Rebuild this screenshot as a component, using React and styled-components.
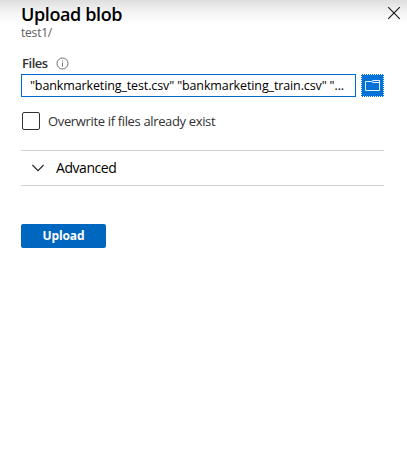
import React from "react";
import styled, { createGlobalStyle } from "styled-components";

const GlobalStyle = createGlobalStyle`
  * { box-sizing: border-box; }
  body { margin: 0; background: #fff; font-family: "Open Sans", "Noto Sans", sans-serif; }
  button { font-family: inherit; }
`;

const Panel = styled.main`
  width: 407px;
  height: 465px;
  padding: 0 23px 0 21px;
  background: linear-gradient(#dedede 0, #ebebeb 7px, #f6f6f6 14px, #fff 25px);
  overflow: hidden;
`;

const Header = styled.header`
  display: flex;
  justify-content: space-between;
  height: 52px;
  margin-right: -17px;
`;

const Title = styled.h1`
  margin: 2px 0 0;
  font-size: 18px;
  line-height: 24px;
  font-weight: 600;
  letter-spacing: -0.38px;
  color: #000;
  white-space: nowrap;
`;

const Path = styled.div`
  font-size: 12px;
  line-height: 13px;
  letter-spacing: -0.2px;
  color: #605e5c;
`;

const CloseButton = styled.button`
  display: flex;
  width: 14px;
  height: 14px;
  margin-top: 6px;
  padding: 0;
  border: 0;
  background: none;
`;

const FieldLabel = styled.label`
  display: flex;
  align-items: center;
  gap: 8px;
  height: 22px;
  padding-left: 1px;
  font-size: 13px;
  line-height: 18px;
  font-weight: 600;
  letter-spacing: -0.45px;
  color: #323130;
`;

const LabelText = styled.span`
  margin-top: -1px;
`;

const FileRow = styled.div`
  display: flex;
  gap: 5px;
  height: 23px;
`;

const FileInput = styled.div`
  width: 335px;
  padding-left: 8px;
  border: 1px solid #0069cd;
  background: #fff;
  font-size: 12.5px;
  line-height: 21px;
  letter-spacing: -0.12px;
  color: #000;
  white-space: nowrap;
`;

const BrowseButton = styled.button`
  display: flex;
  align-items: center;
  justify-content: center;
  width: 23px;
  height: 23px;
  padding: 0;
  border: 1px dotted #fff;
  background: #0072da;
`;

const CheckRow = styled.label`
  display: flex;
  align-items: center;
  gap: 8px;
  height: 18px;
  margin: 15px 0 20px 1px;
  font-size: 13px;
  line-height: 18px;
  letter-spacing: -0.35px;
  color: #323130;
  white-space: nowrap;
`;

const CheckBox = styled.span`
  width: 18px;
  height: 18px;
  border: 1px solid #323130;
  border-radius: 2px;
`;

const Accordion = styled.div`
  display: flex;
  align-items: center;
  gap: 12px;
  height: 36px;
  padding-left: 11px;
  border-top: 1px solid #d2d2d2;
  border-bottom: 1px solid #d2d2d2;
  font-size: 14px;
  letter-spacing: -0.45px;
  color: #000;
`;

const AccordionTitle = styled.span`
  margin-top: -2px;
`;

const UploadButton = styled.button`
  display: block;
  width: 85px;
  height: 24px;
  margin-top: 38px;
  padding: 0;
  border: 0;
  border-radius: 2px;
  background: #0067c0;
  color: #fff;
  font-size: 12px;
  line-height: 24px;
  font-weight: 700;
  letter-spacing: -0.1px;
`;

export default function App() {
  return (
    <Panel>
      <GlobalStyle />
      <Header>
        <div>
          <Title>Upload blob</Title>
          <Path>test1/</Path>
        </div>
        <CloseButton aria-label="Close">
          <svg width="14" height="14" viewBox="0 0 14 14" fill="none" stroke="#1b1b1b" strokeWidth="1.15">
            <path d="M1.2 1.2 12.8 12.8M12.8 1.2 1.2 12.8" />
          </svg>
        </CloseButton>
      </Header>
      <FieldLabel>
        <LabelText>Files</LabelText>
        <svg width="13" height="13" viewBox="0 0 13 13" fill="none" stroke="#605e5c">
          <circle cx="6.5" cy="6.5" r="5.5" strokeWidth=".9" />
          <path d="M6.5 5.6v4M6.5 3.4v1.1" strokeWidth=".9" />
        </svg>
      </FieldLabel>
      <FileRow>
        <FileInput>"bankmarketing_test.csv" "bankmarketing_train.csv" "...</FileInput>
        <BrowseButton aria-label="Browse files">
          <svg width="15" height="13" viewBox="0 0 15 13" fill="none" stroke="#fff" strokeWidth=".9">
            <path d="M.5 2.5h6L8 1.5h6.5v10H.5zM6.5 2.5 8 3.5h6.5" />
          </svg>
        </BrowseButton>
      </FileRow>
      <CheckRow>
        <CheckBox />
        <span>Overwrite if files already exist</span>
      </CheckRow>
      <Accordion>
        <svg width="12" height="8" viewBox="0 0 12 8" fill="none" stroke="#222" strokeWidth="1.1">
          <path d="M.4 1 6 6.6 11.6 1" />
        </svg>
        <AccordionTitle>Advanced</AccordionTitle>
      </Accordion>
      <UploadButton>Upload</UploadButton>
    </Panel>
  );
}
